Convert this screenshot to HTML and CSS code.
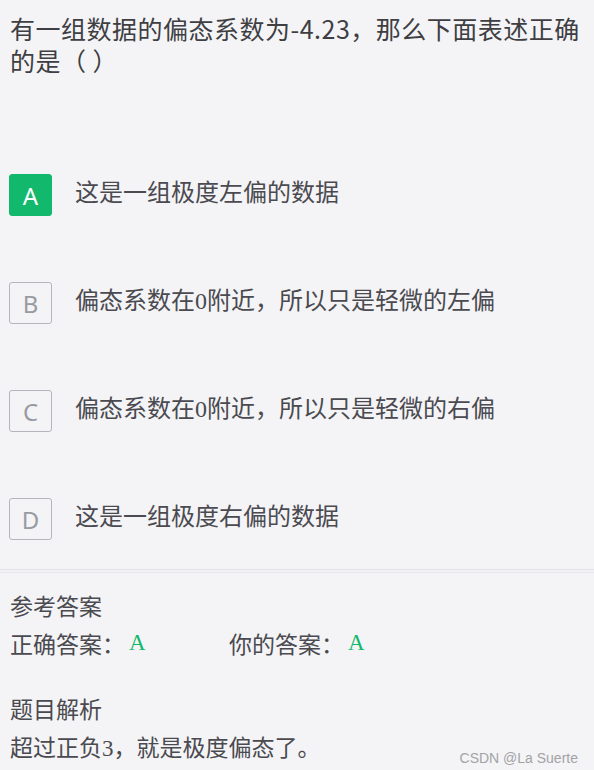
FILE: index.html
```html
<!DOCTYPE html>
<html lang="zh-CN">
<head>
<meta charset="utf-8">
<title>题目</title>
<link rel="stylesheet" href="styles.css">
</head>
<body>
<div class="page">
  <h1 class="question">有一组数据的偏态系数为-4.23，那么下面表述正确的是（ ）</h1>

  <ul class="options">
    <li class="option">
      <span class="badge badge-correct">A</span>
      <span class="option-text">这是一组极度左偏的数据</span>
    </li>
    <li class="option">
      <span class="badge">B</span>
      <span class="option-text">偏态系数在<span class="num">0</span>附近，所以只是轻微的左偏</span>
    </li>
    <li class="option">
      <span class="badge">C</span>
      <span class="option-text">偏态系数在<span class="num">0</span>附近，所以只是轻微的右偏</span>
    </li>
    <li class="option">
      <span class="badge">D</span>
      <span class="option-text">这是一组极度右偏的数据</span>
    </li>
  </ul>

  <div class="divider"></div>

  <section class="answer">
    <div class="line">参考答案</div>
    <div class="line answer-row">
      <span class="answer-item">正确答案：<span class="answer-letter">A</span></span>
      <span class="answer-item">你的答案：<span class="answer-letter">A</span></span>
    </div>
  </section>

  <section class="analysis">
    <div class="line">题目解析</div>
    <div class="line last-line">
      <span>超过正负<span class="num">3</span>，就是极度偏态了。</span>
      <span class="watermark">CSDN @La Suerte</span>
    </div>
  </section>
</div>
</body>
</html>
```

FILE: styles.css
```css
* {
  box-sizing: border-box;
}

html, body {
  margin: 0;
  padding: 0;
  background: #f4f4f6;
}

body {
  font-family: "Noto Sans CJK SC", "Noto Sans", "Liberation Sans", sans-serif;
  color: #48484d;
  height: 770px;
  overflow: hidden;
}

.page {
  display: flex;
  flex-direction: column;
}

.question {
  margin: 12px 0 0 0;
  padding: 0 10px;
  font-size: 25px;
  font-weight: 400;
  line-height: 32px;
  color: #3e3e43;
  letter-spacing: 0.5px;
}

.options {
  list-style: none;
  margin: 98px 0 0 0;
  padding: 0 0 0 9px;
  display: flex;
  flex-direction: column;
  gap: 66px;
}

.option {
  display: flex;
  align-items: flex-start;
  gap: 23px;
  height: 42px;
}

.badge {
  flex: none;
  width: 43px;
  height: 42px;
  border: 1px solid #b3b6bc;
  border-radius: 3px;
  display: flex;
  align-items: center;
  justify-content: center;
  font-family: "Noto Sans", "Liberation Sans", sans-serif;
  font-size: 24px;
  color: #989ba1;
  background: transparent;
}

.badge-correct {
  background: #12b96d;
  border-color: #12b96d;
  color: #ffffff;
}

.option-text {
  font-size: 24px;
  line-height: 34px;
  color: #4a4a50;
}

.num {
  font-family: "Liberation Serif", serif;
}

.divider {
  margin-top: 29px;
  height: 4px;
  border-top: 1px solid #e3e2e8;
  border-bottom: 1px solid #e8e7ec;
  background: #f1f1f4;
}

.answer,
.analysis {
  padding: 0 10px;
  font-size: 23px;
  color: #4a4a50;
}

.answer {
  margin-top: 13px;
}

.analysis {
  margin-top: 27px;
}

.line {
  line-height: 38px;
  height: 38px;
}

.answer-row {
  display: flex;
}

.answer-item {
  display: inline-flex;
  align-items: baseline;
}

.answer-item:first-child {
  width: 219px;
}

.answer-letter {
  font-family: "Liberation Serif", serif;
  font-size: 23px;
  color: #12b96d;
  margin-left: 4px;
  position: relative;
  top: -3px;
}

.last-line {
  display: flex;
  justify-content: space-between;
  align-items: baseline;
}

.watermark {
  font-family: "Liberation Sans", sans-serif;
  font-size: 14px;
  color: #a3a3a6;
  margin-right: 6px;
  position: relative;
  top: 7px;
}
```
